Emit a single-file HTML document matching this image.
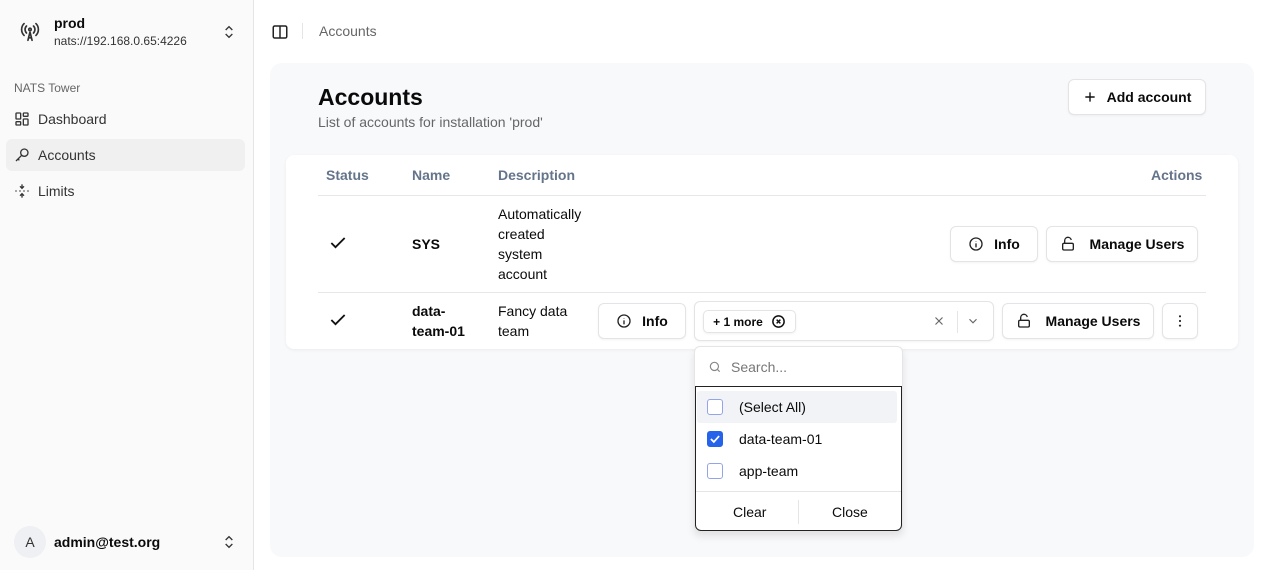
<!DOCTYPE html><html><head><style>
*{box-sizing:border-box;margin:0;padding:0}
body{width:1264px;height:570px;overflow:hidden;font-family:"Liberation Sans",sans-serif;font-size:14px;color:#0a0a0a;background:#fff;position:relative}
.a{position:absolute}
.sb{left:0;top:0;width:254px;height:570px;background:#fafafa;border-right:1px solid #e5e5e5}
.btn{position:absolute;background:#fff;border:1px solid #e4e4e7;border-radius:6px;font-weight:bold;font-size:14px;display:flex;align-items:center;justify-content:center;gap:10px;box-shadow:0 1px 2px rgba(0,0,0,.05)}
svg{display:block;flex-shrink:0}
.th{position:absolute;top:167px;font-weight:bold;color:#64748b;font-size:14px}
.cb{position:absolute;left:707px;width:16px;height:16px;border:1px solid #93a5e8;border-radius:3px;background:#fff}
</style></head><body>
<div class="a sb">
 <svg class="a" style="left:20px;top:22px" width="20" height="20" viewBox="0 0 24 24" fill="none" stroke="#333" stroke-width="2" stroke-linecap="round"><path d="M4.9 16.1a10 10 0 0 1 0-14.2M7.8 13.2a6 6 0 0 1 0-8.4M16.2 4.8a6 6 0 0 1 0 8.4M19.1 1.9a10 10 0 0 1 0 14.2"/><circle cx="12" cy="9" r="1.5"/><path d="M9.5 22 12 12l2.5 10M10.3 19h3.4"/></svg>
 <div class="a" style="left:54px;top:15px;font-weight:bold;font-size:14px">prod</div>
 <div class="a" style="left:54px;top:34px;font-size:12px;color:#333">nats://192.168.0.65:4226</div>
 <svg class="a" style="left:221px;top:24px" width="16" height="16" viewBox="0 0 24 24" fill="none" stroke="#333" stroke-width="2"><path d="m7 15 5 5 5-5M7 9l5-5 5 5"/></svg>
 <div class="a" style="left:14px;top:81px;font-size:12px;color:#666">NATS Tower</div>
 <svg class="a" style="left:14px;top:111px" width="16" height="16" viewBox="0 0 24 24" fill="none" stroke="#333" stroke-width="2"><rect x="3" y="3" width="7" height="9" rx="1"/><rect x="14" y="3" width="7" height="5" rx="1"/><rect x="14" y="12" width="7" height="9" rx="1"/><rect x="3" y="16" width="7" height="5" rx="1"/></svg>
 <div class="a" style="left:38px;top:111px;color:#333">Dashboard</div>
 <div class="a" style="left:6px;top:139px;width:239px;height:32px;background:#f0f0f0;border-radius:6px"></div>
 <svg class="a" style="left:14px;top:147px" width="16" height="16" viewBox="0 0 24 24" fill="none" stroke="#333" stroke-width="2"><circle cx="15.5" cy="8.5" r="5.5"/><path d="M11.5 12.5 3 21M6 18l2 2"/></svg>
 <div class="a" style="left:38px;top:147px;color:#333">Accounts</div>
 <svg class="a" style="left:14px;top:183px" width="16" height="16" viewBox="0 0 24 24" fill="none" stroke="#333" stroke-width="2"><path d="M12 2v6m0 8v6M9 5l3 3 3-3M9 19l3-3 3 3M2 12h2m4 0h2m4 0h2m4 0h2"/></svg>
 <div class="a" style="left:38px;top:183px;color:#333">Limits</div>
 <div class="a" style="left:14px;top:526px;width:32px;height:32px;border-radius:50%;background:#eef0f3;text-align:center;line-height:32px;color:#333">A</div>
 <div class="a" style="left:54px;top:534px;font-weight:bold">admin@test.org</div>
 <svg class="a" style="left:221px;top:534px" width="16" height="16" viewBox="0 0 24 24" fill="none" stroke="#333" stroke-width="2"><path d="m7 15 5 5 5-5M7 9l5-5 5 5"/></svg>
</div>
<svg class="a" style="left:271px;top:23px" width="18" height="18" viewBox="0 0 24 24" fill="none" stroke="#222" stroke-width="2"><rect x="3" y="4" width="18" height="16" rx="2"/><path d="M12 4v16"/></svg>
<div class="a" style="left:302px;top:23px;width:1px;height:16px;background:#e5e5e5"></div>
<div class="a" style="left:319px;top:23px;color:#666">Accounts</div>
<div class="a" style="left:270px;top:63px;width:984px;height:494px;background:#f8f9fb;border-radius:12px"></div>
<div class="a" style="left:318px;top:84px;font-size:23px;font-weight:bold">Accounts</div>
<div class="a" style="left:318px;top:114px;color:#666">List of accounts for installation 'prod'</div>
<div class="btn" style="left:1068px;top:79px;width:138px;height:36px;gap:10px"><svg width="14" height="14" viewBox="0 0 24 24" fill="none" stroke="#111" stroke-width="2.4"><path d="M12 4v16M4 12h16"/></svg>Add account</div>
<div class="a" style="left:286px;top:155px;width:952px;height:194px;background:#fff;border-radius:8px;box-shadow:0 1px 3px rgba(0,0,0,.06)"></div>
<div class="th" style="left:326px">Status</div><div class="th" style="left:412px">Name</div><div class="th" style="left:498px">Description</div><div class="th" style="left:1151px">Actions</div>
<div class="a" style="left:318px;top:195px;width:888px;height:1px;background:#e5e7eb"></div>
<div class="a" style="left:318px;top:292px;width:888px;height:1px;background:#e5e7eb"></div>
<svg class="a" style="left:328px;top:233px" width="20" height="20" viewBox="0 0 24 24" fill="none" stroke="#111" stroke-width="2.2"><path d="M4 12l5 5L20 6"/></svg>
<div class="a" style="left:412px;top:236px;font-weight:bold">SYS</div>
<div class="a" style="left:498px;top:204px;line-height:20px;width:100px">Automatically<br>created<br>system<br>account</div>
<div class="btn" style="left:950px;top:226px;width:88px;height:36px"><svg width="16" height="16" viewBox="0 0 24 24" fill="none" stroke="#222" stroke-width="2"><circle cx="12" cy="12" r="9"/><path d="M12 11v6M12 7.5v.5"/></svg>Info</div>
<div class="btn" style="left:1046px;top:226px;width:152px;height:36px;gap:14px"><svg width="16" height="16" viewBox="0 0 24 24" fill="none" stroke="#222" stroke-width="2"><rect x="4" y="11" width="16" height="10" rx="2"/><path d="M7 11V7a5 5 0 0 1 9.9-1"/></svg>Manage Users</div>
<svg class="a" style="left:328px;top:310px" width="20" height="20" viewBox="0 0 24 24" fill="none" stroke="#111" stroke-width="2.2"><path d="M4 12l5 5L20 6"/></svg>
<div class="a" style="left:412px;top:301px;font-weight:bold;line-height:20px">data-<br>team-01</div>
<div class="a" style="left:498px;top:301px;line-height:20px">Fancy data<br>team</div>
<div class="btn" style="left:598px;top:303px;width:88px;height:36px"><svg width="16" height="16" viewBox="0 0 24 24" fill="none" stroke="#222" stroke-width="2"><circle cx="12" cy="12" r="9"/><path d="M12 11v6M12 7.5v.5"/></svg>Info</div>
<div class="a" style="left:694px;top:301px;width:300px;height:40px;border:1px solid #e4e4e7;border-radius:6px;background:#fff;box-shadow:0 1px 2px rgba(0,0,0,.05)"></div>
<div class="a" style="left:703px;top:310px;width:93px;height:23px;border:1px solid #e4e4e7;border-radius:5px;font-size:12px;font-weight:bold;display:flex;align-items:center;justify-content:center;gap:8px;box-shadow:0 1px 2px rgba(0,0,0,.06)">+ 1 more <svg width="15" height="15" viewBox="0 0 24 24" fill="none" stroke="#111" stroke-width="2.4"><circle cx="12" cy="12" r="9"/><path d="m9 9 6 6m0-6-6 6"/></svg></div>
<svg class="a" style="left:932px;top:314px" width="14" height="14" viewBox="0 0 24 24" fill="none" stroke="#666" stroke-width="2"><path d="m6 6 12 12M18 6 6 18"/></svg>
<div class="a" style="left:957px;top:311px;width:1px;height:22px;background:#e5e5e5"></div>
<svg class="a" style="left:966px;top:314px" width="14" height="14" viewBox="0 0 24 24" fill="none" stroke="#666" stroke-width="2"><path d="m6 9 6 6 6-6"/></svg>
<div class="btn" style="left:1002px;top:303px;width:152px;height:36px;gap:14px"><svg width="16" height="16" viewBox="0 0 24 24" fill="none" stroke="#222" stroke-width="2"><rect x="4" y="11" width="16" height="10" rx="2"/><path d="M7 11V7a5 5 0 0 1 9.9-1"/></svg>Manage Users</div>
<div class="btn" style="left:1162px;top:303px;width:36px;height:36px"><svg width="16" height="16" viewBox="0 0 24 24" fill="#222"><circle cx="12" cy="5" r="1.6"/><circle cx="12" cy="12" r="1.6"/><circle cx="12" cy="19" r="1.6"/></svg></div>
<div class="a" style="left:694px;top:346px;width:209px;height:186px;background:#fff;border:1px solid #e5e5e5;border-radius:6px;box-shadow:0 4px 8px rgba(0,0,0,.1)"></div>
<svg class="a" style="left:708px;top:360px" width="14" height="14" viewBox="0 0 24 24" fill="none" stroke="#888" stroke-width="2"><circle cx="11" cy="11" r="7"/><path d="m20 20-4-4"/></svg>
<div class="a" style="left:731px;top:359px;color:#777">Search...</div>
<div class="a" style="left:695px;top:386px;width:207px;height:145px;border:1.5px solid #222;border-radius:0 0 6px 6px"></div>
<div class="a" style="left:697px;top:391px;width:200px;height:32px;background:#f1f3f6;border-radius:3px"></div>
<div class="cb" style="top:399px"></div><div class="a" style="left:739px;top:399px">(Select All)</div>
<div class="cb" style="top:431px;background:#2563eb;border-color:#2563eb"><svg width="14" height="14" viewBox="0 0 24 24" fill="none" stroke="#fff" stroke-width="3"><path d="M5 12l5 5 9-10"/></svg></div><div class="a" style="left:739px;top:431px">data-team-01</div>
<div class="cb" style="top:463px"></div><div class="a" style="left:739px;top:463px">app-team</div>
<div class="a" style="left:696px;top:491px;width:205px;height:1px;background:#e5e5e5"></div>
<div class="a" style="left:798px;top:500px;width:1px;height:24px;background:#e5e5e5"></div>
<div class="a" style="left:733px;top:504px">Clear</div>
<div class="a" style="left:832px;top:504px">Close</div>
</body></html>
